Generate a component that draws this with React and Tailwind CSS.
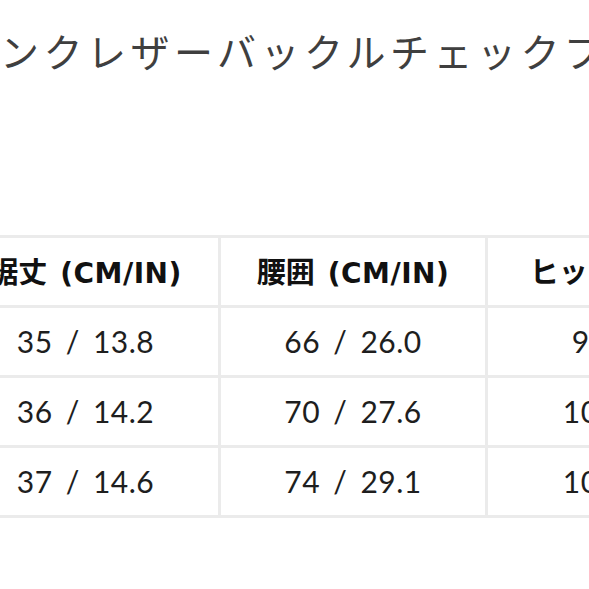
const headers = [
  ["裾丈", "(CM/IN)"],
  ["腰囲", "(CM/IN)"],
  ["ヒップ", "(CM/IN)"],
];

const rows = [
  ["35 / 13.8", "66 / 26.0", "95 / 37.4"],
  ["36 / 14.2", "70 / 27.6", "100 / 39.4"],
  ["37 / 14.6", "74 / 29.1", "104 / 40.9"],
];

const widths = ["w-[268px]", "w-[267px]", "w-[308px]"];

export default function App() {
  return (
    <div className="w-[589px] h-[589px] overflow-hidden bg-white font-['Lato','Noto_Sans_CJK_JP',sans-serif]">
      <div className="pt-[26px] pl-[0px] whitespace-nowrap text-[39px] leading-[48px] tracking-[4.5px] text-[#3f3f3f] font-['Noto_Sans_CJK_JP',sans-serif] font-normal">
        ンクレザーバックルチェックプリーツスカート
      </div>
      <table className="mt-[161px] ml-[-50px] w-[843px] min-w-[843px] border-collapse table-fixed">
        <colgroup>
          {widths.map((w) => (
            <col key={w} className={w} />
          ))}
        </colgroup>
        <thead>
          <tr>
            {headers.map(([jp, unit]) => (
              <th
                key={jp}
                className="h-[70px] border-[3px] border-[#ebebeb] text-center text-[#111] whitespace-nowrap"
              >
                <span className="font-['Noto_Sans_CJK_JP',sans-serif] font-bold text-[29px]">{jp}</span>
                <span className="ml-[13px] font-['DejaVu_Sans',sans-serif] font-bold text-[28px] tracking-[0.5px]">{unit}</span>
              </th>
            ))}
          </tr>
        </thead>
        <tbody>
          {rows.map((r, ri) => (
            <tr key={ri}>
              {r.map((c, ci) => (
                <td
                  key={ci}
                  className="h-[70px] border-[3px] border-[#ebebeb] text-center text-[30px] text-[#1e1e1e] whitespace-nowrap [word-spacing:5px] tracking-[0.5px]"
                >
                  {c}
                </td>
              ))}
            </tr>
          ))}
        </tbody>
      </table>
    </div>
  );
}
